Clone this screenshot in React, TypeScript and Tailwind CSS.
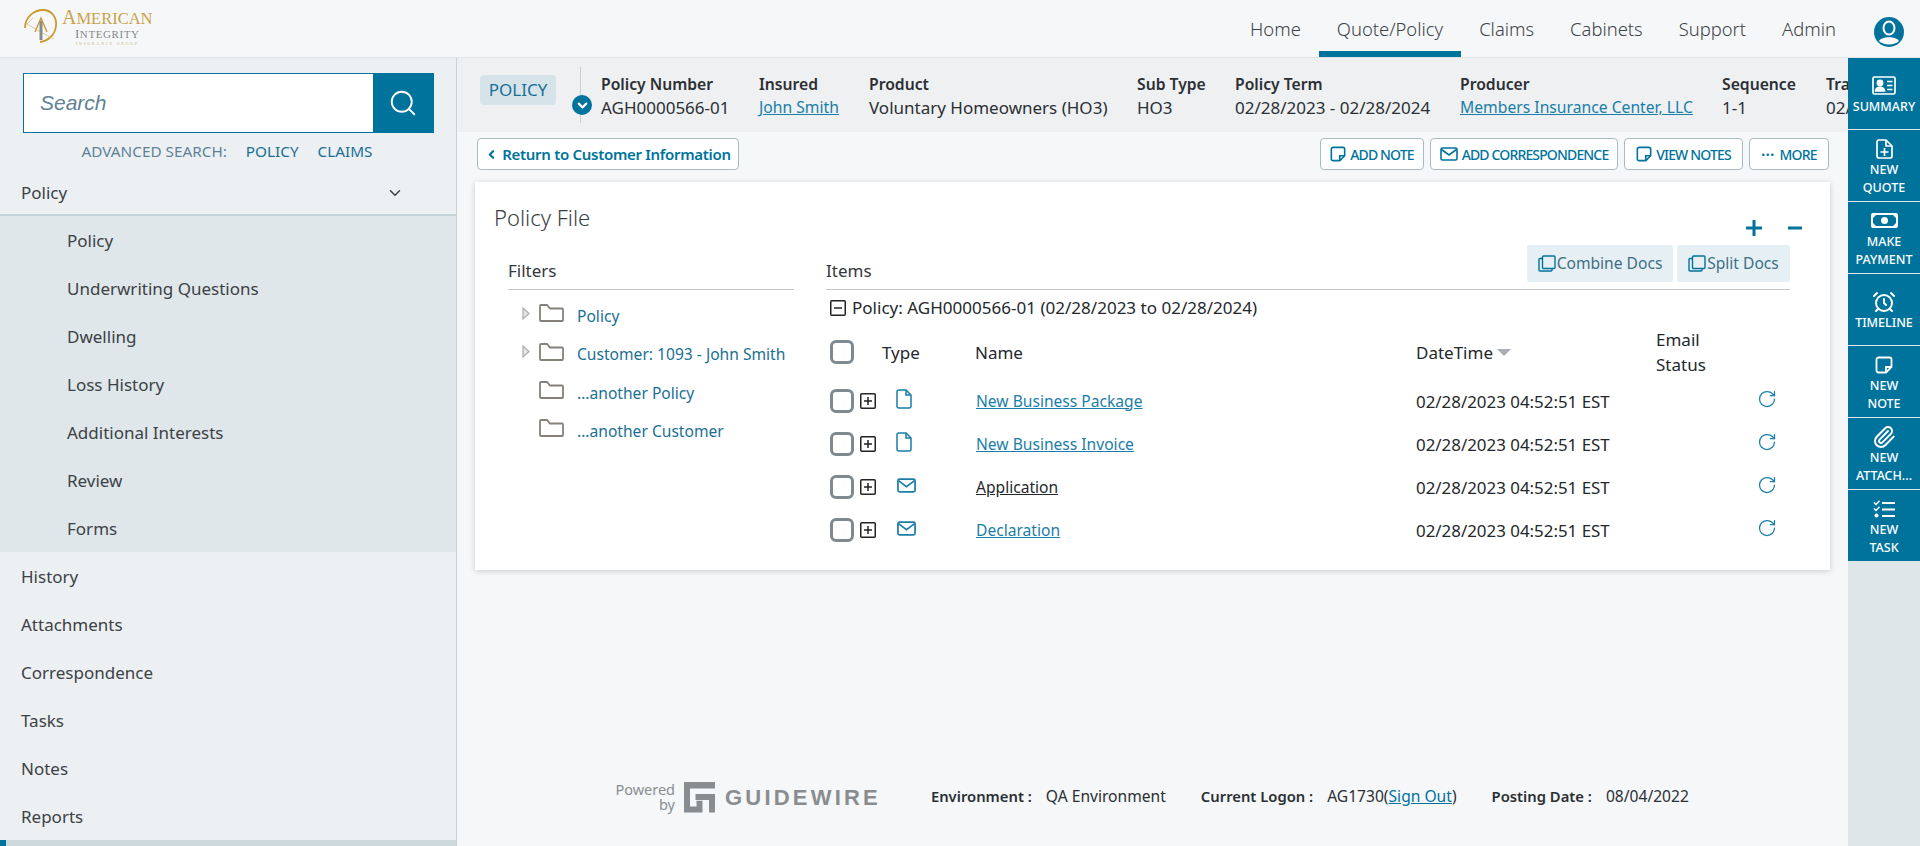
import { AlarmClock, ChevronDown, ChevronLeft, Paperclip, RotateCw, Search } from "lucide-react";

const subItems = ["Policy", "Underwriting Questions", "Dwelling", "Loss History", "Additional Interests", "Review", "Forms"];
const navItems = ["History", "Attachments", "Correspondence", "Tasks", "Notes", "Reports"];
const topNav = ["Home", "Quote/Policy", "Claims", "Cabinets", "Support", "Admin"];
const rows = [
  { name: "New Business Package", icon: "file", link: true },
  { name: "New Business Invoice", icon: "file", link: true },
  { name: "Application", icon: "mail", link: false },
  { name: "Declaration", icon: "mail", link: true },
];

function Logo() {
  return (
    <div className="flex items-start h-full pt-[9px] pl-[24px]">
      <svg width="35" height="34" viewBox="0 0 35 34" className="shrink-0">
        <path d="M1 19 C1 8 10 1 19 1 C28 1 33 9 32 17 C31 26 24 32 16 33" fill="none" stroke="#c99a2e" strokeWidth="1.8" />
        <path d="M9 9 L3 15 L22 26 L30 30" fill="none" stroke="#d8bd78" strokeWidth="0.8" />
        <path d="M11 23 L17 9 L23 23" fill="none" stroke="#c99a2e" strokeWidth="1.4" />
        <rect x="15.5" y="12" width="3" height="19" fill="#8a8a8a" />
      </svg>
      <div className="flex flex-col items-center ml-[3px] font-['Liberation_Serif',serif]">
        <span className="text-[20px] text-[#c9a24a] leading-[16px] whitespace-nowrap">
          A<span className="text-[16.5px]">MERICAN</span>
        </span>
        <span className="text-[13px] text-[#85878a] leading-[12px] mt-[1px] tracking-[0.6px] whitespace-nowrap">
          I<span className="text-[11px]">NTEGRITY</span>
        </span>
        <span className="text-[4px] leading-[6px] text-[#c9b27a] tracking-[1.7px] mt-[1px] whitespace-nowrap">INSURANCE GROUP</span>
      </div>
    </div>
  );
}

function Header() {
  return (
    <header className="h-[58px] shrink-0 bg-[#f5f7f9] border-b border-[#dfe3e6] flex justify-between">
      <Logo />
      <div className="flex items-stretch">
        <nav className="flex items-stretch text-[18.4px] font-light text-[#3d4347]">
          {topNav.map((item) => (
            <div
              key={item}
              className={
                item === "Quote/Policy"
                  ? "px-[18px] flex items-center border-b-[6px] border-[#00739d] pt-[6px]"
                  : "px-[18px] flex items-center border-b-[6px] border-transparent pt-[6px]"
              }
            >
              {item}
            </div>
          ))}
        </nav>
        <div className="w-[66px] flex items-center justify-center pt-[7px] pl-[3px]">
          <svg width="30" height="30" viewBox="0 0 30 30">
            <circle cx="15" cy="15" r="15" fill="#00739d" />
            <ellipse cx="15" cy="11" rx="5.5" ry="6.5" fill="none" stroke="#fff" strokeWidth="2" />
            <path d="M5 24 C8 19 22 19 25 24 C21 28.5 9 28.5 5 24 Z" fill="#fff" />
          </svg>
        </div>
      </div>
    </header>
  );
}

function Sidebar() {
  return (
    <aside className="w-[457px] shrink-0 bg-[#ecf0f3] border-r border-[#c5d2d7] flex flex-col text-[17px] text-[#3c4145] overflow-hidden">
      <div className="pt-[15px] pl-[23px] pr-[22px]">
        <div className="flex h-[60px] border border-[#00739d] bg-white">
          <div className="flex-1 flex items-center pl-[16px] text-[21px] italic text-[#5f8296] font-['Liberation_Sans',sans-serif]">Search</div>
          <div className="w-[60px] bg-[#00739d] flex items-center justify-center">
            <Search className="text-white" size={30} strokeWidth={1.5} />
          </div>
        </div>
      </div>
      <div className="mt-[8px] h-[20px] flex items-center justify-center gap-[19px] text-[15.3px] pr-[2px]">
        <span className="text-[#5f8296]">ADVANCED SEARCH:</span>
        <span className="text-[#1a6f95]">POLICY</span>
        <span className="text-[#1a6f95]">CLAIMS</span>
      </div>
      <div className="h-[48px] mt-[7px] flex items-center justify-between pl-[21px] pr-[52px] pt-[2px] shrink-0">
        <span>Policy</span>
        <ChevronDown size={18} strokeWidth={2} />
      </div>
      <div className="bg-[#dfe7ea] border-t-2 border-[#c5d2d7] -mt-[2px] shrink-0">
        {subItems.map((item) => (
          <div key={item} className="h-[48px] flex items-center pl-[67px] pt-[2px]">
            {item}
          </div>
        ))}
      </div>
      {navItems.map((item) => (
        <div key={item} className="h-[48px] flex items-center pl-[21px] pt-[2px] shrink-0">
          {item}
        </div>
      ))}
      <div className="h-[6px] shrink-0 bg-[#cdd9dd] flex">
        <div className="w-[6px] bg-[#00739d]" />
      </div>
    </aside>
  );
}

function NoteIcon({ size = 16 }: { size?: number }) {
  return (
    <svg width={size} height={size} viewBox="0 0 18 18" fill="none" stroke="currentColor" strokeWidth="1.8" className="shrink-0">
      <path d="M11 16.5 H3.5 A2 2 0 0 1 1.5 14.5 V3.5 A2 2 0 0 1 3.5 1.5 H14.5 A2 2 0 0 1 16.5 3.5 V11 Z" />
      <path d="M11 16.5 V11 H16.5" />
    </svg>
  );
}

function MailIcon({ width = 18, height = 14 }: { width?: number; height?: number }) {
  return (
    <svg width={width} height={height} viewBox="0 0 18 14" fill="none" stroke="currentColor" strokeWidth="1.6" className="shrink-0">
      <rect x="1" y="1" width="16" height="12" rx="1.5" />
      <path d="M1.5 2.5 L9 8 L16.5 2.5" />
    </svg>
  );
}

function FileIcon() {
  return (
    <svg width="16" height="20" viewBox="0 0 16 20" fill="none" stroke="#1a7ea8" strokeWidth="1.5">
      <path d="M10 1 H3 A2 2 0 0 0 1 3 V17 A2 2 0 0 0 3 19 H13 A2 2 0 0 0 15 17 V6 Z" />
      <path d="M10 1 V6 H15" />
    </svg>
  );
}

function CopyIcon() {
  return (
    <svg width="18" height="17" viewBox="0 0 18 17" fill="none" stroke="#00739d" strokeWidth="1.4" className="shrink-0">
      <rect x="4.5" y="1" width="12.5" height="12.5" rx="1" />
      <path d="M4.5 3.5 H2 A1 1 0 0 0 1 4.5 V15 A1 1 0 0 0 2 16 H13 A1 1 0 0 0 14 15 V13.5" />
    </svg>
  );
}

function FolderIcon() {
  return (
    <svg width="25" height="18" viewBox="0 0 25 18" fill="none" stroke="#85807a" strokeWidth="1.8">
      <path d="M1 16 V2 A1 1 0 0 1 2 1 H8 L11 4.5 H23 A1 1 0 0 1 24 5.5 V16 A1 1 0 0 1 23 17 H2 A1 1 0 0 1 1 16 Z" />
    </svg>
  );
}

function PlusBox() {
  return (
    <svg width="16" height="16" viewBox="0 0 16 16" fill="none" stroke="#222" strokeWidth="1.5" className="shrink-0">
      <rect x="0.75" y="0.75" width="14.5" height="14.5" rx="1" />
      <path d="M8 4 V12 M4 8 H12" />
    </svg>
  );
}

function Check() {
  return <div className="w-[24px] h-[24px] rounded-[6px] border-[3px] border-[#7f8a90] bg-white shrink-0" />;
}

function PolicyBar() {
  const cols = [
    { w: "w-[158px]", label: "Policy Number", value: "AGH0000566-01" },
    { w: "w-[110px]", label: "Insured", value: "John Smith", link: true },
    { w: "w-[268px]", label: "Product", value: "Voluntary Homeowners (HO3)" },
    { w: "w-[98px]", label: "Sub Type", value: "HO3" },
    { w: "w-[225px]", label: "Policy Term", value: "02/28/2023 - 02/28/2024" },
    { w: "w-[262px]", label: "Producer", value: "Members Insurance Center, LLC", link: true },
    { w: "w-[104px]", label: "Sequence", value: "1-1" },
    { w: "w-[120px]", label: "Transaction", value: "02/28/2023" },
  ];
  return (
    <div className="h-[74px] shrink-0 bg-[#eef0f2] flex pl-[23px] overflow-hidden">
      <div className="mt-[17px] h-[30px] w-[76px] rounded-[4px] bg-[#d6e4ea] text-[#1a6f95] text-[17px] flex items-center justify-center shrink-0">POLICY</div>
      <div className="relative ml-[24px] mr-[20px] mt-[9px] h-[56px] w-px bg-[#c9ced1] shrink-0">
        <div className="absolute left-[-8px] top-[28px] w-[20px] h-[20px] rounded-full bg-[#00739d] flex items-center justify-center">
          <ChevronDown size={15} strokeWidth={3.5} className="text-white" />
        </div>
      </div>
      {cols.map((c) => (
        <div key={c.label} className={c.w + " shrink-0 pt-[15px] text-[17px] leading-[23px] text-[#2b2f33] whitespace-nowrap"}>
          <div className="font-semibold text-[15.7px]">{c.label}</div>
          <div className={c.link ? "text-[15.7px] text-[#1a7ea8] underline" : ""}>{c.value}</div>
        </div>
      ))}
    </div>
  );
}

function ActionBar() {
  const btn = "h-[32px] rounded-[4px] border border-[#a9bcc4] bg-white flex items-center justify-center text-[#00739d] whitespace-nowrap";
  const caps = "text-[14px] font-medium tracking-[-0.85px]";
  return (
    <div className="flex justify-between items-center pt-[6px] pl-[20px] pr-[19px]">
      <button className={btn + " w-[262px] gap-[4px] text-[15px] font-semibold tracking-[-0.3px]"}>
        <ChevronLeft size={13} strokeWidth={4} />
        <span>Return to Customer Information</span>
      </button>
      <div className="flex gap-[6px]">
        <button className={btn + " " + caps + " w-[104px] gap-[4px]"}><NoteIcon />ADD NOTE</button>
        <button className={btn + " " + caps + " w-[188px] gap-[4px]"}><MailIcon />ADD CORRESPONDENCE</button>
        <button className={btn + " " + caps + " w-[119px] gap-[4px]"}><NoteIcon />VIEW NOTES</button>
        <button className={btn + " " + caps + " w-[80px] gap-[5px]"}><span className="font-bold tracking-[0.5px] leading-none -mt-[6px]">...</span>MORE</button>
      </div>
    </div>
  );
}

function Filters() {
  const items = [
    { label: "Policy", arrow: true },
    { label: "Customer: 1093 - John Smith", arrow: true },
    { label: "...another Policy", arrow: false },
    { label: "...another Customer", arrow: false },
  ];
  return (
    <div className="w-[286px] shrink-0">
      <div className="h-[37px] border-b border-[#c4c6c8] text-[17px] text-[#33383c] flex items-center pb-[1px]">Filters</div>
      <div className="pt-[7px]">
        {items.map((it) => (
          <div key={it.label} className="h-[38.4px] flex items-center pl-[14px]">
            <div className="w-[17px] shrink-0 -mt-[6px]">
              {it.arrow && (
                <svg width="8" height="13" viewBox="0 0 8 13" fill="#e4e6e7" stroke="#a9adb0" strokeWidth="1.2">
                  <path d="M1 1 L7 6.5 L1 12 Z" />
                </svg>
              )}
            </div>
            <div className="-mt-[6px] shrink-0"><FolderIcon /></div>
            <span className="ml-[13px] pt-[1px] text-[15.6px] text-[#1a6f95] whitespace-nowrap">{it.label}</span>
          </div>
        ))}
      </div>
    </div>
  );
}

function Items() {
  const grid = "grid grid-cols-[30px_22px_93px_441px_240px_100px_1fr] items-center";
  return (
    <div className="flex-1 relative">
      <div className="h-[37px] border-b border-[#c4c6c8] text-[17px] text-[#33383c] flex items-center pb-[1px]">Items</div>
      <div className="absolute right-0 -top-[8px] flex gap-[4px] text-[15.6px] text-[#3d6f86]">
        <div className="h-[37px] w-[146px] bg-[#e6f0f4] rounded-[2px] flex items-center justify-center gap-[1px]"><CopyIcon />Combine Docs</div>
        <div className="h-[37px] w-[113px] bg-[#e6f0f4] rounded-[2px] flex items-center justify-center gap-[1px]"><CopyIcon />Split Docs</div>
      </div>
      <div className="flex items-center h-[35px] pl-[4px] gap-[6px] text-[17.05px] text-[#24282c]">
        <svg width="16" height="16" viewBox="0 0 16 16" fill="none" stroke="#222" strokeWidth="1.5">
          <rect x="0.75" y="0.75" width="14.5" height="14.5" rx="1" />
          <path d="M4 8 H12" />
        </svg>
        <span>Policy: AGH0000566-01 (02/28/2023 to 02/28/2024)</span>
      </div>
      <div className={grid + " pl-[4px] h-[53px] text-[17px] text-[#24282c]"}>
        <Check />
        <span />
        <span className="pt-[2px]">Type</span>
        <span className="pt-[2px]">Name</span>
        <span className="flex items-center gap-[4px] pt-[2px]">
          DateTime
          <svg width="14" height="7" viewBox="0 0 14 7" fill="#a9adb4"><path d="M0 0 H14 L7 7 Z" /></svg>
        </span>
        <span className="col-span-2 leading-[25px]">Email<br />Status</span>
      </div>
      <div className="pt-[1px]">
        {rows.map((r) => (
          <div key={r.name} className={grid + " pl-[4px] h-[43px] text-[16.9px] text-[#24282c]"}>
            <Check />
            <PlusBox />
            <span className="pl-[14px] -mt-[3px] text-[#1a7ea8]">{r.icon === "file" ? <FileIcon /> : <MailIcon width={21} height={15} />}</span>
            <span className={r.link ? "pl-[1px] pt-[2px] text-[15.6px] text-[#1a7ea8] underline" : "pl-[1px] pt-[2px] text-[15.6px] text-[#24282c] underline"}>{r.name}</span>
            <span className="pt-[2px]">02/28/2023 04:52:51 EST</span>
            <span />
            <span className="pl-[1px] -mt-[3px] text-[#1a7ea8]"><RotateCw size={20} strokeWidth={1.5} /></span>
          </div>
        ))}
      </div>
    </div>
  );
}

function Card() {
  return (
    <section className="ml-[18px] mr-[18px] mt-[12px] h-[388px] bg-white shadow-[0_1px_6px_rgba(0,0,0,0.18)] pl-[19px] pr-[40px] pt-[17px] shrink-0">
      <div className="flex justify-between h-[40px]">
        <h1 className="text-[22px] font-light text-[#3a3e42] leading-[36px]">Policy File</h1>
        <div className="flex items-start gap-[26px] pt-[21px] -mr-[12px]">
          <svg width="16" height="16" viewBox="0 0 16 16" stroke="#00739d" strokeWidth="3"><path d="M8 0 V16 M0 8 H16" /></svg>
          <svg width="14" height="16" viewBox="0 0 14 16" stroke="#00739d" strokeWidth="3"><path d="M0 8 H14" /></svg>
        </div>
      </div>
      <div className="flex gap-[32px] pl-[14px] pt-[14px]">
        <Filters />
        <Items />
      </div>
    </section>
  );
}

function Footer() {
  return (
    <footer className="mt-auto h-[72px] shrink-0 pl-[158px] text-[15.6px] text-[#2b2f33] whitespace-nowrap">
      <div className="h-[46px] flex items-center">
        <div className="text-[14.5px] text-[#8a8d8f] leading-[15px] text-right w-[60px]">Powered<br />by</div>
        <svg width="31" height="31" viewBox="0 0 31 31" className="ml-[9px] shrink-0" fill="#8a8d8f">
          <path d="M0 0 H31 V6.5 H6 V24.5 H12.5 V18.8 H18.5 V30.5 H0 Z" />
          <path d="M11.5 12 H31 V30.5 H25 V18 H11.5 Z" />
        </svg>
        <span className="ml-[10px] text-[22px] font-bold tracking-[3.2px] text-[#8a8d8f] font-['Liberation_Sans',sans-serif]">GUIDEWIRE</span>
        <div className="ml-[50px] flex gap-[35px]">
          <span><b className="font-semibold text-[14.8px] mr-[14px]">Environment :</b>QA Environment</span>
          <span><b className="font-semibold text-[14.8px] mr-[14px]">Current Logon :</b>AG1730(<span className="text-[#00739d] underline">Sign Out</span>)</span>
          <span><b className="font-semibold text-[14.8px] mr-[14px]">Posting Date :</b>08/04/2022</span>
        </div>
      </div>
    </footer>
  );
}

function Rail() {
  const items = [
    {
      lines: ["SUMMARY"],
      box: "pt-[18px] gap-[3px]",
      icon: (
        <svg width="24" height="19" viewBox="0 0 24 19" fill="none" stroke="#fff" strokeWidth="1.7" className="block">
          <rect x="1" y="1" width="22" height="17" rx="1.5" />
          <circle cx="8" cy="7" r="2.6" fill="#fff" />
          <path d="M3.5 15 C4 10 12 10 12.5 15 Z" fill="#fff" />
          <path d="M15 5.5 H20.5 M15 9.5 H20.5 M15 13.5 H20.5" />
        </svg>
      ),
    },
    {
      lines: ["NEW", "QUOTE"],
      box: "pt-[9px] gap-[2px]",
      icon: (
        <svg width="17" height="20" viewBox="0 0 17 20" fill="none" stroke="#fff" strokeWidth="1.7" className="block">
          <path d="M10 1 H3 A2 2 0 0 0 1 3 V17 A2 2 0 0 0 3 19 H14 A2 2 0 0 0 16 17 V7 Z" />
          <path d="M10 1 V7 H16 M8.5 9 V17 M4.5 13 H12.5" />
        </svg>
      ),
    },
    {
      lines: ["MAKE", "PAYMENT"],
      box: "pt-[11px] gap-[5px]",
      icon: (
        <svg width="27" height="15" viewBox="0 0 27 15" fill="none" className="block">
          <rect x="1" y="1" width="25" height="13" rx="1" stroke="#fff" strokeWidth="2" />
          <path d="M2 2 H5 L2 5 Z M25 2 H22 L25 5 Z M2 13 H5 L2 10 Z M25 13 H22 L25 10 Z" fill="#fff" />
          <ellipse cx="13.5" cy="7.5" rx="3.5" ry="3.5" fill="#fff" />
        </svg>
      ),
    },
    {
      lines: ["TIMELINE"],
      box: "pt-[16px] gap-[0px]",
      icon: <AlarmClock size={24} strokeWidth={2} className="text-white block" />,
    },
    {
      lines: ["NEW", "NOTE"],
      box: "pt-[10px] gap-[3px]",
      icon: <NoteIcon size={18} />,
    },
    {
      lines: ["NEW", "ATTACH..."],
      box: "pt-[7px] gap-[0px]",
      icon: <Paperclip size={24} strokeWidth={2} className="text-white block" />,
    },
    {
      lines: ["NEW", "TASK"],
      box: "pt-[10px] gap-[3px]",
      icon: (
        <svg width="22" height="18" viewBox="0 0 22 18" fill="none" stroke="#fff" strokeWidth="2" className="block">
          <path d="M1 2.5 L3 4.5 L6.5 0.8 M1 8.5 L3 10.5 L6.5 6.8" strokeWidth="1.4" />
          <circle cx="3.5" cy="15.5" r="2" fill="#fff" stroke="none" />
          <path d="M9 3 H22 M9 9.5 H22 M9 16 H22" />
        </svg>
      ),
    },
  ];
  return (
    <aside className="w-[72px] shrink-0 bg-[#dfe6e9] flex flex-col">
      {items.map((it) => (
        <div
          key={it.lines.join(" ")}
          className={"h-[72px] shrink-0 bg-[#00739d] border-b border-[#dfe6e9] flex flex-col items-center text-white text-[12.5px] font-medium leading-[18px] whitespace-nowrap " + it.box}
        >
          <div className="text-white">{it.icon}</div>
          <div className="flex flex-col items-center">
            {it.lines.map((l) => (
              <span key={l}>{l}</span>
            ))}
          </div>
        </div>
      ))}
    </aside>
  );
}

export default function App() {
  return (
    <div className="w-[1920px] h-[846px] overflow-hidden flex flex-col bg-[#f5f7f9] font-['Noto_Sans',sans-serif]">
      <Header />
      <div className="flex-1 flex min-h-0">
        <Sidebar />
        <main className="flex-1 min-w-0 flex flex-col">
          <PolicyBar />
          <ActionBar />
          <Card />
          <Footer />
        </main>
        <Rail />
      </div>
    </div>
  );
}
